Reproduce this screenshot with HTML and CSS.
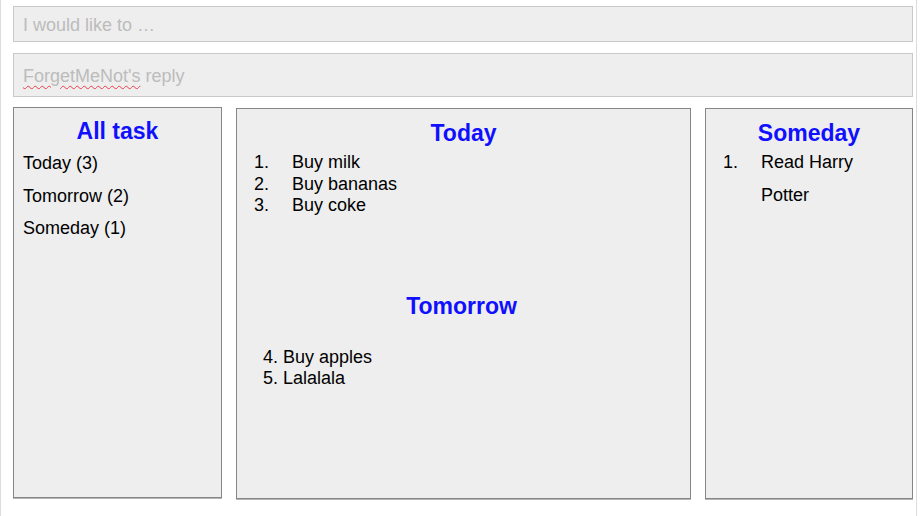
FILE: index.html
```html
<!DOCTYPE html>
<html>
<head>
<meta charset="utf-8">
<title>ForgetMeNot</title>
<link rel="stylesheet" href="styles.css">
</head>
<body>
<div class="page">
  <div class="field field-ask"><span>I would like to …</span></div>
  <div class="field field-reply"><span><span class="misspelled">ForgetMeNot's</span> reply</span></div>
  <div class="board">
    <section class="panel panel-all">
      <h2 class="title title-all">All task</h2>
      <ul class="summary">
        <li>Today (3)</li>
        <li>Tomorrow (2)</li>
        <li>Someday (1)</li>
      </ul>
    </section>
    <section class="panel panel-main">
      <h2 class="title">Today</h2>
      <ol class="tasks">
        <li>Buy milk</li>
        <li>Buy bananas</li>
        <li>Buy coke</li>
      </ol>
      <h2 class="title title-tomorrow">Tomorrow</h2>
      <ol class="tasks-plain" start="4">
        <li>Buy apples</li>
        <li>Lalalala</li>
      </ol>
    </section>
    <section class="panel panel-someday">
      <h2 class="title">Someday</h2>
      <ol class="tasks tasks-tall">
        <li>Read Harry Potter</li>
      </ol>
    </section>
  </div>
</div>
</body>
</html>
```
FILE: styles.css
```css
html, body {
  margin: 0;
  padding: 0;
  background: #ffffff;
}
body {
  font-family: "Liberation Sans", Arial, sans-serif;
  color: #000;
}
.page {
  width: 917px;
  min-height: 516px;
  box-sizing: border-box;
  border-left: 1px solid #dcdcdc;
  border-right: 1px solid #dcdcdc;
  padding: 6px 0 0 12px;
  display: flex;
  flex-direction: column;
}
.field {
  width: 900px;
  box-sizing: border-box;
  background: #eeeeee;
  border: 1px solid #c9c9c9;
  color: #bcbcbc;
  font-size: 18px;
  padding: 2px 0 0 9px;
  display: flex;
  align-items: center;
}
.field-ask {
  height: 36px;
}
.field-reply {
  height: 44px;
  margin-top: 11px;
}
.misspelled {
  text-decoration: underline wavy #e8404a;
  text-decoration-thickness: 1px;
  text-underline-offset: 3px;
}
.board {
  display: grid;
  grid-template-columns: 209px 455px 208px;
  column-gap: 14px;
  margin-top: 10px;
  width: 900px;
}
.panel {
  box-sizing: border-box;
  height: 391px;
  padding-top: 1px;
  background: #eeeeee;
  border: 1px solid #868686;
  box-shadow: 0 1px 0 #b5b5b5;
}
.panel-main, .panel-someday {
  margin-top: 1px;
}
.title {
  margin: 10px 0 0;
  text-align: center;
  color: #1010ff;
  font-size: 23px;
  font-weight: bold;
  line-height: 26px;
}
.title-all {
  margin-top: 9px;
}
.summary {
  list-style: none;
  margin: 3px 0 0;
  padding: 0 0 0 9px;
  font-size: 18px;
  line-height: 32.5px;
}
.tasks {
  list-style: none;
  counter-reset: item;
  margin: 6px 0 0;
  padding: 0 17px 0 17px;
  font-size: 18px;
  line-height: 21.5px;
}
.tasks li {
  display: flex;
  counter-increment: item;
}
.tasks li::before {
  content: counter(item) ".";
  flex: 0 0 38px;
}
.tasks-tall {
  line-height: 32.5px;
  margin-top: 0;
}
.title-tomorrow {
  margin-top: 76px;
  padding-right: 4px;
}
.tasks-plain {
  list-style-position: inside;
  margin: 28px 0 0;
  padding: 0 0 0 26px;
  font-size: 18px;
  line-height: 21.5px;
}
```
